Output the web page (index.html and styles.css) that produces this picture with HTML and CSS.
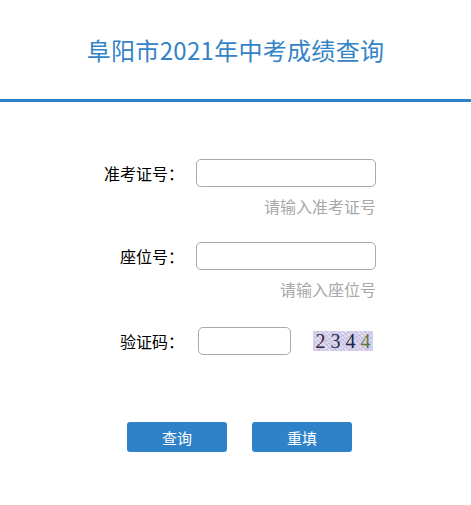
FILE: index.html
```html
<!DOCTYPE html>
<html lang="zh-CN">
<head>
  <meta charset="UTF-8" />
  <title>阜阳市2021年中考成绩查询</title>
  <link rel="stylesheet" href="styles.css">
</head>
<body>
  <div class="header">
    <h1>阜阳市2021年中考成绩查询</h1>
  </div>

  <form class="query-form" onsubmit="return false;">
    <div class="row row-first">
      <label for="zkzh">准考证号：</label>
      <div class="field">
        <input type="text" id="zkzh">
        <div class="hint">请输入准考证号</div>
      </div>
    </div>

    <div class="row row-second">
      <label for="zwh">座位号：</label>
      <div class="field">
        <input type="text" id="zwh">
        <div class="hint">请输入座位号</div>
      </div>
    </div>

    <div class="row row-code">
      <label for="yzm">验证码：</label>
      <div class="code-field">
        <input type="text" id="yzm" class="code-input">
        <div class="captcha">
          <span class="d1">2</span><span class="d2">3</span><span class="d3">4</span><span class="d4">4</span>
        </div>
      </div>
    </div>

    <div class="buttons">
      <button type="submit">查询</button>
      <button type="reset">重填</button>
    </div>
  </form>
</body>
</html>
```

FILE: styles.css
```css
body {
  margin: 0;
  background: #fff;
  font-family: "Noto Sans CJK SC", "Noto Sans", sans-serif;
  color: #000;
}

.header {
  padding: 35px 0 34px;
  border-bottom: 3px solid #2f80c6;
  text-align: center;
}
.header h1 {
  margin: 0;
  font-size: 24px;
  line-height: 30px;
  font-weight: normal;
  letter-spacing: 0.3px;
  color: #3483c7;
}

.query-form {
  padding: 57px 0 0 100px;
}

.row {
  display: flex;
  align-items: flex-start;
}
.row label {
  width: 84px;
  height: 28px;
  line-height: 28px;
  text-align: right;
  font-size: 16px;
  margin-right: 12px;
}
.row-first { margin-bottom: 26px; }
.row-second { margin-bottom: 28px; }

.field {
  width: 180px;
}
.row input {
  box-sizing: border-box;
  width: 180px;
  height: 28px;
  border: 1px solid #a9a9a9;
  border-radius: 5px;
  padding: 0 6px;
  font-size: 14px;
  outline: none;
}
.hint {
  margin-top: 9px;
  line-height: 20px;
  font-size: 16px;
  color: #a8a8a8;
  text-align: right;
  white-space: nowrap;
}

.code-field {
  display: flex;
  align-items: center;
}
.row input.code-input {
  width: 93px;
  margin-left: 2px;
}
.captcha {
  width: 60px;
  height: 20px;
  margin-left: 22px;
  display: flex;
  justify-content: center;
  align-items: center;
  gap: 5px;
  font-family: "Liberation Serif", serif;
  font-size: 20px;
  line-height: 20px;
  background:
    repeating-linear-gradient(45deg, rgba(255,255,255,0.4) 0 1px, transparent 1px 3px),
    repeating-linear-gradient(-30deg, rgba(150,140,190,0.3) 0 1px, transparent 1px 4px),
    #d2cce8;
}
.captcha .d1 { color: #3a2040; }
.captcha .d2 { color: #2a2c55; }
.captcha .d3 { color: #1c1f4a; }
.captcha .d4 { color: #5e7a45; }

.buttons {
  display: flex;
  gap: 25px;
  margin-top: 67px;
  padding-left: 27px;
}
.buttons button {
  width: 100px;
  height: 30px;
  border: none;
  border-radius: 3px;
  background: #2f82c8;
  color: #fff;
  font-family: "Noto Sans CJK SC", sans-serif;
  font-size: 15px;
  cursor: pointer;
}
```
